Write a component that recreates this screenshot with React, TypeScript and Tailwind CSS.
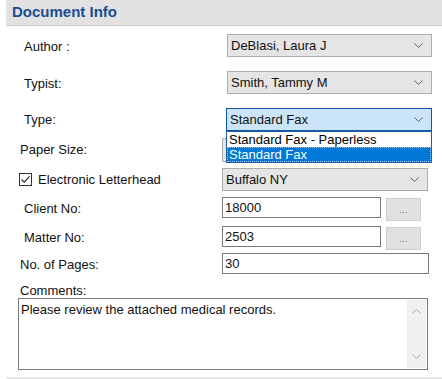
import React from 'react';

function Chevron({ up = false, color = '#5f5f5f' }: { up?: boolean; color?: string }) {
  return (
    <svg width="9" height="5" viewBox="0 0 9 5" className="shrink-0">
      <path
        d={up ? 'M0.5 4.5 L4.5 0.5 L8.5 4.5' : 'M0.5 0.5 L4.5 4.5 L8.5 0.5'}
        fill="none"
        stroke={color}
        strokeWidth="1"
      />
    </svg>
  );
}

function Combo({ value, width, height = 23, active = false }: { value: string; width: number; height?: number; active?: boolean }) {
  return (
    <div
      style={{ width, height }}
      className={
        active
          ? 'flex items-center justify-between border border-[#0a59a8] bg-[#cce4f7] pl-[3px] pr-[8px]'
          : 'flex items-center justify-between border border-[#adadad] bg-[#e5e5e5] pl-[3px] pr-[8px]'
      }
    >
      <span className="leading-none">{value}</span>
      <Chevron />
    </div>
  );
}

function TextBox({ value, width }: { value: string; width: number }) {
  return (
    <div style={{ width }} className="flex h-[21px] items-center border border-[#7a7a7a] bg-white pl-[2px]">
      <span className="leading-none">{value}</span>
    </div>
  );
}

function Dots({ offset = 0 }: { offset?: number }) {
  return (
    <div
      style={{ marginTop: offset }}
      className="ml-[5px] flex h-[23px] w-[35px] items-end justify-center border border-[#cfcfcf] bg-[#e1e1e1] pb-[5px] text-[10px] leading-none text-[#7a7a7a]"
    >
      ...
    </div>
  );
}

export default function App() {
  return (
    <div className="relative h-[379px] w-[442px] overflow-hidden bg-white font-['Liberation_Sans',Arial,sans-serif] text-[13px] text-[#111]">
      {/* header */}
      <div className="ml-[6px] h-[26px] border-b border-[#cbcbcb] bg-[#e2e2e2] pl-[6px] pt-[3px] text-[15px] font-bold leading-[18px] text-[#1c4e93]">
        Document Info
      </div>

      <div className="mt-[8px] flex items-center">
        <div className="w-[227px] pl-[24px] pt-[2px]">Author :</div>
        <Combo value="DeBlasi, Laura J" width={205} />
      </div>

      <div className="mt-[14px] flex items-center">
        <div className="w-[227px] pl-[24px] pt-[2px]">Typist:</div>
        <Combo value="Smith, Tammy M" width={205} />
      </div>

      <div className="relative z-10 mt-[14px] flex items-center">
        <div className="w-[226px] pl-[24px] pt-[1px]">Type:</div>
        <Combo value="Standard Fax" width={206} active />
        <div className="absolute left-[226px] top-full w-[206px] border border-[#1f5d9e] bg-white">
          <div className="h-[15px] pl-[2px] leading-[15px] text-black">Standard Fax - Paperless</div>
          <div className="h-[15px] border border-dotted border-[#9bc4ec] bg-[#0078d7] pl-[1px] leading-[13px] text-white">
            Standard Fax
          </div>
        </div>
      </div>

      <div className="mt-[7px] flex items-center">
        <div className="w-[222px] pl-[20px]">Paper Size:</div>
        <Combo value="" width={206} height={24} />
      </div>

      <div className="mt-[6px] flex items-center">
        <div className="flex w-[222px] items-center pl-[19px]">
          <div className="flex h-[13px] w-[13px] items-center justify-center border border-[#333] bg-white">
            <svg width="11" height="11" viewBox="0 0 11 11">
              <path d="M1.5 5.5 L4.2 8.2 L9.6 2.4" fill="none" stroke="#222" strokeWidth="1.1" />
            </svg>
          </div>
          <span className="ml-[6px]">Electronic Letterhead</span>
        </div>
        <Combo value="Buffalo NY" width={206} />
      </div>

      <div className="mt-[6px] flex items-start">
        <div className="flex h-[21px] w-[222px] items-center pl-[24px] pt-[2px]">Client No:</div>
        <TextBox value="18000" width={159} />
        <Dots offset={1} />
      </div>

      <div className="mt-[5px] flex items-start">
        <div className="flex h-[21px] w-[222px] items-center pl-[24px] pt-[2px]">Matter No:</div>
        <TextBox value="2503" width={159} />
        <Dots offset={1} />
      </div>

      <div className="mt-[3px] flex items-center">
        <div className="w-[222px] pl-[20px] pt-[2px]">No. of Pages:</div>
        <TextBox value="30" width={207} />
      </div>

      <div className="mt-[8px] h-[15px] pl-[20px] leading-[15px]">Comments:</div>

      <div className="ml-[18px] flex h-[72px] w-[410px] border border-[#7a7a7a] bg-white">
        <div className="flex-1 pl-[2px] pt-[3px] leading-[15px]">Please review the attached medical records.</div>
        <div className="my-[1px] mr-[1px] flex w-[19px] flex-col items-center justify-between bg-[#f0f0f0] py-[9px]">
          <Chevron up color="#a6a6a6" />
          <Chevron color="#a6a6a6" />
        </div>
      </div>

      <div className="ml-[6px] mt-[7px] h-[2px] bg-[#e8e8e8]" />
    </div>
  );
}
